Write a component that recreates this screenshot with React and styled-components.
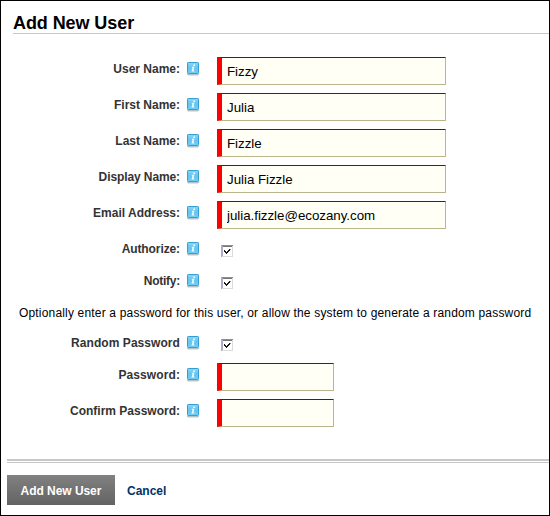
import React from "react";
import styled, { createGlobalStyle } from "styled-components";

const GlobalStyle = createGlobalStyle`
  * { box-sizing: border-box; }
  body { margin: 0; background: #fff; }
  body, input, button { font-family: "Liberation Sans", Arial, sans-serif; }
`;

const Page = styled.main`
  width: 550px;
  height: 516px;
  border: 1px solid #000;
  background: #fff;
  overflow: hidden;
  display: flex;
  flex-direction: column;
`;

const Title = styled.h1`
  margin: 11px 0 0 12px;
  height: 22px;
  border-bottom: 1px solid #c8c8c8;
  font-size: 18px;
  line-height: 22px;
  font-weight: bold;
  letter-spacing: -0.08px;
  color: #000;
  white-space: nowrap;
`;

const Form = styled.form`
  display: flex;
  flex-direction: column;
  padding-top: 23px;
`;

const Row = styled.div`
  display: grid;
  grid-template-columns: 179px 14px 1fr;
  column-gap: 7px;
  align-items: start;
  height: ${(p) => (p.$short ? 32 : 36)}px;
`;

const Label = styled.label`
  padding-top: 4px;
  text-align: right;
  font-size: 12px;
  line-height: 16px;
  font-weight: bold;
  letter-spacing: ${(p) => p.$spacing ?? 0}px;
  color: #333;
  white-space: nowrap;
`;

const IconSvg = styled.svg`
  display: block;
  margin-top: 5px;
`;

const TextInput = styled.input`
  width: ${(p) => (p.$narrow ? 117 : 229)}px;
  height: 28px;
  margin: 0 0 0 9px;
  padding: 1px 4px 1px 5px;
  border: 0 solid #bab58c;
  border-width: 1px 1px 1px 5px;
  border-top-color: #2c2c2c;
  border-left-color: #f00;
  border-radius: 0;
  outline: 0;
  background: #fffff5;
  color: #000;
  font-size: 13.33px;
  letter-spacing: -0.03px;
`;

const CheckLabel = styled.label`
  display: block;
  width: 12px;
  height: 12px;
  margin: 8px 0 0 13px;
`;

const HiddenCheck = styled.input`
  appearance: none;
  display: block;
  width: 0;
  height: 0;
  margin: 0;
  & + svg path { visibility: hidden; }
  &:checked + svg path { visibility: visible; }
`;

const CheckSvg = styled.svg`
  display: block;
`;

const Note = styled.p`
  margin: 0 0 0 18px;
  padding-top: 4px;
  height: 30px;
  font-size: 12px;
  line-height: 16px;
  letter-spacing: 0.174px;
  color: #000;
  white-space: nowrap;
`;

const Divider = styled.hr`
  width: 542px;
  height: 4px;
  margin: 24px 0 0 6px;
  border: 0 solid #c8c8c8;
  border-width: 2px 0 1px;
`;

const Actions = styled.footer`
  display: flex;
  align-items: center;
  gap: 12px;
  padding: 12px 0 0 6px;
`;

const Submit = styled.button`
  width: 108px;
  height: 30px;
  padding: 1px 0 0;
  border: 0;
  background: linear-gradient(#818181, #636363);
  color: #fff;
  font-size: 12px;
  font-weight: bold;
  letter-spacing: -0.05px;
  white-space: nowrap;
`;

const Cancel = styled.a`
  padding-top: 1px;
  color: #003366;
  font-size: 12px;
  font-weight: bold;
  text-decoration: none;
`;

function InfoIcon() {
  return (
    <IconSvg width="14" height="16" viewBox="0 0 14 16" aria-label="Help">
      <defs>
        <linearGradient id="info" x1="0" y1="0" x2="0" y2="1">
          <stop offset="0" stopColor="#8dd5f3" />
          <stop offset="0.5" stopColor="#65c3ee" />
          <stop offset="1" stopColor="#6ed0fa" />
        </linearGradient>
      </defs>
      <rect x="0" y="12" width="12" height="1" fill="#b4c2ca" />
      <rect x="1" y="13" width="10" height="1" fill="#dfe3e5" />
      <rect x="0.5" y="0.5" width="11" height="11" rx="0.7" fill="url(#info)" stroke="#359fd3" />
      <path d="M6.4 2.6h1.8l-.3 1.4H6.1zM5 4.8h2.5L6.5 8.6h.9l-.3.8H4.5l1-3.7h-.8z" fill="#f2fbff" />
    </IconSvg>
  );
}

function Checkbox({ id }) {
  return (
    <CheckLabel>
      <HiddenCheck id={id} type="checkbox" defaultChecked />
      <CheckSvg width="12" height="12" viewBox="0 0 12 12" shapeRendering="crispEdges">
        <rect width="12" height="12" fill="#dddbd8" />
        <rect width="12" height="1" fill="#8e8e8c" />
        <rect width="1" height="12" fill="#b5b1a0" />
        <rect x="1" y="1" width="10" height="10" fill="#fff" />
        <rect x="1" y="1" width="10" height="1" fill="#777" />
        <rect x="1" y="1" width="1" height="10" fill="#a9acc4" />
        <path d="M3 5h1v1h1v1h1V6h1V5h1V4h1v2H8v1H7v1H6v1H5V8H4V7H3z" fill="#17131c" />
        <path d="M9 4h1v1H9z" fill="#8a7f80" />
      </CheckSvg>
    </CheckLabel>
  );
}

function Field({ id, label, type = "text", value, narrow, short, spacing }) {
  return (
    <Row $short={short}>
      <Label htmlFor={id} $spacing={spacing}>{label}</Label>
      <InfoIcon />
      {type === "checkbox" ? (
        <Checkbox id={id} />
      ) : (
        <TextInput id={id} type={type} defaultValue={value} $narrow={narrow} />
      )}
    </Row>
  );
}

export default function App() {
  return (
    <>
      <GlobalStyle />
      <Page>
        <Title>Add New User</Title>
        <Form>
          <Field id="user" label="User Name:" value="Fizzy" />
          <Field id="first" label="First Name:" value="Julia" />
          <Field id="last" label="Last Name:" value="Fizzle" />
          <Field id="display" label="Display Name:" value="Julia Fizzle" spacing={-0.1} />
          <Field id="email" label="Email Address:" value="julia.fizzle@ecozany.com" />
          <Field id="authorize" label="Authorize:" type="checkbox" short spacing={-0.1} />
          <Field id="notify" label="Notify:" type="checkbox" short spacing={-0.25} />
          <Note>Optionally enter a password for this user, or allow the system to generate a random password</Note>
          <Field id="random" label="Random Password" type="checkbox" short spacing={0.06} />
          <Field id="password" label="Password:" type="password" narrow spacing={0.1} />
          <Field id="confirm" label="Confirm Password:" type="password" narrow />
        </Form>
        <Divider />
        <Actions>
          <Submit type="button">Add New User</Submit>
          <Cancel href="#">Cancel</Cancel>
        </Actions>
      </Page>
    </>
  );
}
